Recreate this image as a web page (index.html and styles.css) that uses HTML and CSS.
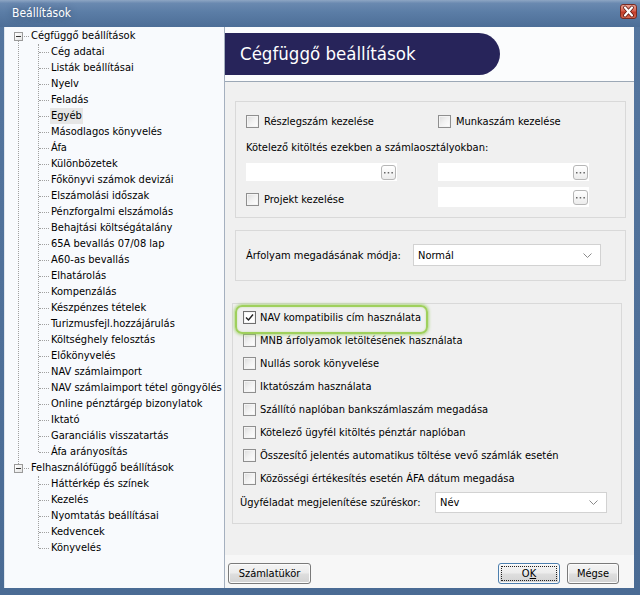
FILE: index.html
```html
<!DOCTYPE html>
<html lang="hu">
<head>
<meta charset="utf-8">
<title>Beállítások</title>
<link rel="stylesheet" href="styles.css">
</head>
<body>
<div class="window">
  <div class="titlebar">
    <span class="title">Beállítások</span>
    <span class="close"><svg width="17" height="15" viewBox="0 0 17 15"><path d="M5 3.5 L12 11.5 M12 3.5 L5 11.5" stroke="#5a1410" stroke-width="3.6" stroke-linecap="round"/><path d="M5 3.5 L12 11.5 M12 3.5 L5 11.5" stroke="#fff" stroke-width="2.2" stroke-linecap="round"/></svg></span>
  </div>
  <div class="client">
    <div class="tree">
      <div class="root first">
        <div class="node"><span class="exp"><span></span></span><span class="rdots"></span><span class="label">Cégfüggő beállítások</span></div>
        <ul class="children">
          <li><span class="hdots"></span><span class="label">Cég adatai</span></li>
          <li><span class="hdots"></span><span class="label">Listák beállításai</span></li>
          <li><span class="hdots"></span><span class="label">Nyelv</span></li>
          <li><span class="hdots"></span><span class="label">Feladás</span></li>
          <li><span class="hdots"></span><span class="label sel">Egyéb</span></li>
          <li><span class="hdots"></span><span class="label">Másodlagos könyvelés</span></li>
          <li><span class="hdots"></span><span class="label">Áfa</span></li>
          <li><span class="hdots"></span><span class="label">Különbözetek</span></li>
          <li><span class="hdots"></span><span class="label">Főkönyvi számok devizái</span></li>
          <li><span class="hdots"></span><span class="label">Elszámolási időszak</span></li>
          <li><span class="hdots"></span><span class="label">Pénzforgalmi elszámolás</span></li>
          <li><span class="hdots"></span><span class="label">Behajtási költségátalány</span></li>
          <li><span class="hdots"></span><span class="label">65A bevallás 07/08 lap</span></li>
          <li><span class="hdots"></span><span class="label">A60-as bevallás</span></li>
          <li><span class="hdots"></span><span class="label">Elhatárolás</span></li>
          <li><span class="hdots"></span><span class="label">Kompenzálás</span></li>
          <li><span class="hdots"></span><span class="label">Készpénzes tételek</span></li>
          <li><span class="hdots"></span><span class="label">Turizmusfejl.hozzájárulás</span></li>
          <li><span class="hdots"></span><span class="label">Költséghely felosztás</span></li>
          <li><span class="hdots"></span><span class="label">Előkönyvelés</span></li>
          <li><span class="hdots"></span><span class="label">NAV számlaimport</span></li>
          <li><span class="hdots"></span><span class="label">NAV számlaimport tétel göngyölés</span></li>
          <li><span class="hdots"></span><span class="label">Online pénztárgép bizonylatok</span></li>
          <li><span class="hdots"></span><span class="label">Iktató</span></li>
          <li><span class="hdots"></span><span class="label">Garanciális visszatartás</span></li>
          <li><span class="hdots"></span><span class="label">Áfa arányosítás</span></li>
        </ul>
      </div>
      <div class="root">
        <div class="node"><span class="exp"><span></span></span><span class="rdots"></span><span class="label">Felhasználófüggő beállítások</span></div>
        <ul class="children">
          <li><span class="hdots"></span><span class="label">Háttérkép és színek</span></li>
          <li><span class="hdots"></span><span class="label">Kezelés</span></li>
          <li><span class="hdots"></span><span class="label">Nyomtatás beállításai</span></li>
          <li><span class="hdots"></span><span class="label">Kedvencek</span></li>
          <li><span class="hdots"></span><span class="label">Könyvelés</span></li>
        </ul>
      </div>
    </div>

    <div class="panel">
      <div class="header">
        <div class="pill">Cégfüggő beállítások</div>
      </div>
      <div class="content">
        <div class="group g1">
          <div class="grid">
            <label class="cb"><span class="box"></span><span>Részlegszám kezelése</span></label>
            <label class="cb"><span class="box"></span><span>Munkaszám kezelése</span></label>
            <div class="span2 caption">Kötelező kitöltés ezekben a számlaosztályokban:</div>
            <div class="field f1"><span class="dots"><svg width="9" height="3" viewBox="0 0 9 3"><rect x="0" y="1" width="1.5" height="1.5" fill="#666"/><rect x="3.7" y="1" width="1.5" height="1.5" fill="#666"/><rect x="7.4" y="1" width="1.5" height="1.5" fill="#666"/></svg></span></div>
            <div class="field"><span class="dots"><svg width="9" height="3" viewBox="0 0 9 3"><rect x="0" y="1" width="1.5" height="1.5" fill="#666"/><rect x="3.7" y="1" width="1.5" height="1.5" fill="#666"/><rect x="7.4" y="1" width="1.5" height="1.5" fill="#666"/></svg></span></div>
            <label class="cb proj"><span class="box"></span><span>Projekt kezelése</span></label>
            <div class="field f3"><span class="dots"><svg width="9" height="3" viewBox="0 0 9 3"><rect x="0" y="1" width="1.5" height="1.5" fill="#666"/><rect x="3.7" y="1" width="1.5" height="1.5" fill="#666"/><rect x="7.4" y="1" width="1.5" height="1.5" fill="#666"/></svg></span></div>
          </div>
        </div>

        <div class="group g2">
          <span class="lbl2">Árfolyam megadásának módja:</span>
          <div class="combo c1"><span>Normál</span><svg width="9" height="5" viewBox="0 0 9 5"><polyline points="0.5,0.5 4.5,4.5 8.5,0.5" fill="none" stroke="#8a8a8a" stroke-width="1"/></svg></div>
        </div>

        <div class="group g3">
          <label class="cb row hl"><span class="box checked"><svg width="11" height="11" viewBox="0 0 11 11"><path d="M2 5.5 L4.5 8 L9 2.5" fill="none" stroke="#222" stroke-width="1.4"/></svg></span><span>NAV kompatibilis cím használata</span></label>
          <label class="cb row"><span class="box"></span><span>MNB árfolyamok letöltésének használata</span></label>
          <label class="cb row"><span class="box"></span><span>Nullás sorok könyvelése</span></label>
          <label class="cb row"><span class="box"></span><span>Iktatószám használata</span></label>
          <label class="cb row"><span class="box"></span><span>Szállító naplóban bankszámlaszám megadása</span></label>
          <label class="cb row"><span class="box"></span><span>Kötelező ügyfél kitöltés pénztár naplóban</span></label>
          <label class="cb row"><span class="box"></span><span>Összesítő jelentés automatikus töltése vevő számlák esetén</span></label>
          <label class="cb row"><span class="box"></span><span>Közösségi értékesítés esetén ÁFA dátum megadása</span></label>
          <div class="filter">
            <span class="lbl3">Ügyféladat megjelenítése szűréskor:</span>
            <div class="combo c2"><span>Név</span><svg width="9" height="5" viewBox="0 0 9 5"><polyline points="0.5,0.5 4.5,4.5 8.5,0.5" fill="none" stroke="#8a8a8a" stroke-width="1"/></svg></div>
          </div>
        </div>
      </div>
      <div class="footer">
        <button class="btn b-szamla">Számlatükör</button>
        <span class="spacer"></span>
        <button class="btn b-ok"><span class="focus">O<u>K</u></span></button>
        <button class="btn b-megse">Mégse</button>
      </div>
    </div>
  </div>
</div>
</body>
</html>
```

FILE: styles.css
```css
* { box-sizing: border-box; }
html, body { margin: 0; padding: 0; }
body {
  width: 640px;
  height: 595px;
  overflow: hidden;
  font-family: "DejaVu Sans Condensed", "DejaVu Sans", sans-serif;
  font-size: 11px;
  color: #000;
}
.window {
  width: 640px;
  height: 595px;
  display: flex;
  flex-direction: column;
  background: linear-gradient(to bottom, #55769f 0%, #4a6b94 100%);
  padding: 0 6px 7px 4px;
}
.titlebar {
  height: 27px;
  display: flex;
  align-items: center;
  justify-content: space-between;
  margin: 0 -6px 0 -4px;
  padding: 0 3px 0 12px;
  background: linear-gradient(to bottom, #8ea6c4 0%, #6a89b0 12%, #5b7da6 45%, #4d6e97 100%);
}
.title {
  color: #fff;
  font-size: 12px;
  text-shadow: 0 0 6px rgba(30, 50, 80, 0.6);
  margin-top: -2px;
}
.close {
  width: 17px;
  height: 15px;
  margin-top: -4px;
  border: 1px solid #7a2a22;
  border-radius: 3px;
  background: linear-gradient(to bottom, #e9a394 0%, #d7614e 45%, #c23b28 55%, #d46a52 100%);
  display: flex;
  align-items: center;
  justify-content: center;
  overflow: hidden;
}
.close svg { display: block; margin: -1px; }
.client {
  flex: 1;
  display: flex;
  min-height: 0;
}

/* Tree */
.tree {
  width: 221px;
  background: #f8fafd;
  border-right: 1px solid #a5b0bf;
  border-left: 1px solid #dfe6ee;
  padding-top: 1px;
  line-height: 16px;
  white-space: nowrap;
}
.root { position: relative; }
.root.first::before {
  content: "";
  position: absolute;
  left: 13px;
  top: 13px;
  height: 427px;
  border-left: 1px dotted #a0a0a0;
}
.node {
  height: 16px;
  display: flex;
  align-items: center;
  padding-left: 9px;
}
.exp {
  width: 9px;
  height: 9px;
  border: 1px solid #9a9a9a;
  background: linear-gradient(135deg, #ffffff, #e4e4e4);
  position: relative;
  z-index: 1;
  display: flex;
  align-items: center;
  justify-content: center;
}
.exp span {
  width: 5px;
  height: 1px;
  background: #333;
}
.rdots {
  width: 5px;
  border-top: 1px dotted #a0a0a0;
  margin: 0 1px 0 1px;
}
.children {
  list-style: none;
  margin: 0;
  padding: 0 0 0 33px;
  position: relative;
}
.children::before {
  content: "";
  position: absolute;
  left: 33px;
  top: 0;
  bottom: 8px;
  border-left: 1px dotted #a0a0a0;
}
.children li {
  height: 16px;
  display: flex;
  align-items: center;
}
.hdots {
  width: 10px;
  border-top: 1px dotted #a0a0a0;
  margin-right: 1px;
  margin-left: 1px;
}
.label { padding: 0 1px; }
.label.sel { background: #e6e6e6; }

/* Panel */
.panel {
  width: 409px;
  display: flex;
  flex-direction: column;
}
.header {
  height: 55px;
  background: #fbfcfd;
  border-bottom: 1px solid #9ca8b6;
  padding-top: 6px;
}
.pill {
  width: 275px;
  height: 42px;
  background: #27245a;
  border-radius: 0 21px 21px 0;
  color: #fff;
  font-size: 18.5px;
  line-height: 42px;
  padding-left: 15px;
}
.content {
  flex: 1;
  background: #f0f0f0;
  padding-top: 19px;
}
.group {
  border: 1px solid #d9d9d9;
}
.g1 {
  margin-left: 10px;
  width: 391px;
  height: 117px;
  padding: 11px 0 0 10px;
}
.grid {
  display: grid;
  grid-template-columns: 192px 151px;
  grid-template-rows: 16px 22px 18px 20px;
  row-gap: 6px;
}
.span2 { grid-column: 1 / 3; line-height: 16px; margin-top: 3px; }
.caption { align-self: center; }
.cb {
  display: flex;
  align-items: center;
  gap: 5px;
  height: 16px;
}
.proj { align-self: center; margin-top: 4px; }
.box {
  width: 13px;
  height: 13px;
  border: 1px solid #8f8f8f;
  background: linear-gradient(135deg, #dcdcdc 0%, #f2f2f2 50%, #ffffff 100%);
  box-shadow: inset 0 0 0 1px #f4f4f4;
  flex: none;
  display: flex;
  align-items: center;
  justify-content: center;
}
.box.checked { background: #fff; border-color: #6f6f6f; }
.box svg { display: block; }
.field {
  width: 151px;
  height: 18px;
  background: #fff;
  display: flex;
  justify-content: flex-end;
  align-items: center;
  padding-right: 1px;
}
.f3 { height: 20px; }
.dots {
  width: 15px;
  height: 15px;
  border: 1px solid #b6b6b6;
  border-radius: 3px;
  background: linear-gradient(to bottom, #ffffff, #ececec);
  display: flex;
  align-items: center;
  justify-content: center;
}
.dots svg { display: block; margin-top: 1px; }

.g2 {
  margin: 12px 0 0 10px;
  width: 391px;
  height: 51px;
  display: flex;
  align-items: center;
  padding: 1px 0 2px 10px;
}
.lbl2 { width: 167px; }
.combo {
  height: 22px;
  background: #fff;
  border: 1px solid #d2d2d2;
  display: flex;
  align-items: center;
  justify-content: space-between;
  padding: 0 8px 0 4px;
}
.combo svg { display: block; }
.c1 { width: 188px; }

.g3 {
  margin: 22px 0 0 7px;
  width: 390px;
  height: 221px;
  padding: 2px 0 0 10px;
}
.row {
  height: 23px;
  gap: 4px;
}
.row.hl { position: relative; }
.row.hl::after {
  content: "";
  position: absolute;
  left: -8px;
  top: -1px;
  width: 189px;
  height: 25px;
  border: 2px solid #9fd05c;
  border-radius: 7px;
  box-shadow: 0 0 3px 1px rgba(150, 205, 90, 0.7), inset 0 0 2px rgba(150, 205, 90, 0.5);
}
.filter {
  display: flex;
  align-items: center;
  height: 22px;
  margin-top: 1px;
  margin-left: -3px;
}
.lbl3 { width: 195px; }
.c2 { width: 172px; height: 21px; }

/* Footer */
.footer {
  height: 33px;
  background: #f7f7f7;
  display: flex;
  align-items: flex-start;
  padding: 8px 15px 0 3px;
}
.spacer { flex: 1; }
.btn {
  height: 21px;
  font-family: inherit;
  font-size: 11px;
  color: #000;
  border: 1px solid #7a7a7a;
  border-radius: 3px;
  background: linear-gradient(to bottom, #f4f4f4 0%, #ececec 48%, #dedede 52%, #d3d3d3 100%);
  box-shadow: inset 0 0 0 1px #fbfbfb;
  padding: 0;
  margin: 0;
}
.b-szamla { width: 83px; }
.b-ok {
  width: 62px;
  margin-right: 7px;
  border-color: #4d7fae;
  padding: 2px;
}
.focus {
  display: flex;
  align-items: center;
  justify-content: center;
  height: 100%;
  border: 1px dotted #222;
}
.b-ok u { text-decoration-thickness: 1px; }
.b-megse { width: 52px; }
```
